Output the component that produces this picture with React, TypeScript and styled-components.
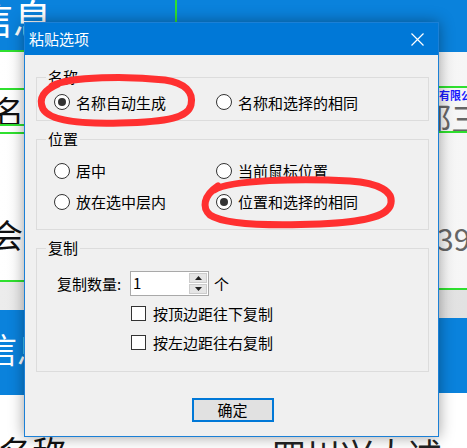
import React from 'react';
import styled, { createGlobalStyle } from 'styled-components';

const GlobalStyle = createGlobalStyle`
  html, body {
    margin: 0;
    padding: 0;
    overflow: hidden;
    background: #ffffff;
  }
  body {
    font-family: "Noto Sans CJK SC", "Noto Sans", sans-serif;
  }
`;

const BLUE = '#0a82dc';
const GREEN = '#2fe02f';

const Desktop = styled.div`
  position: relative;
  width: 467px;
  height: 448px;
  overflow: hidden;
`;

/* ---------- page behind the dialog ---------- */

const Backdrop = styled.div`
  display: grid;
  grid-template-columns: 175px 1fr;
  height: 448px;
`;

const Column = styled.div`
  display: flex;
  flex-direction: column;
  overflow: hidden;
`;

const Cell = styled.div<{ $h: number; $bg?: string; $line?: boolean; $divider?: boolean; $padTop?: number; $padLeft?: number }>`
  flex: 0 0 ${(p) => p.$h}px;
  box-sizing: border-box;
  background: ${(p) => p.$bg || 'linear-gradient(90deg, #ffffff, #f6f6f6)'};
  border-top: ${(p) => (p.$line ? `2px solid ${GREEN}` : 'none')};
  border-left: ${(p) => (p.$divider ? `2px solid ${GREEN}` : 'none')};
  padding-top: ${(p) => p.$padTop || 0}px;
  padding-left: ${(p) => p.$padLeft || 0}px;
  overflow: hidden;
  white-space: nowrap;
`;

const BigText = styled.div<{ $color: string; $size: number; $shift?: number }>`
  color: ${(p) => p.$color};
  font-size: ${(p) => p.$size}px;
  line-height: 1;
  margin-left: ${(p) => p.$shift || 0}px;
`;

const SmallBlue = styled.div`
  color: #1a1aff;
  font-size: 11px;
  font-weight: bold;
  line-height: 11px;
`;

/* ---------- dialog ---------- */

const Dialog = styled.div`
  position: absolute;
  left: 24px;
  top: 22px;
  width: 415px;
  height: 415px;
  box-sizing: border-box;
  border: 1px solid #1b80d6;
  background: #f0f0f0;
  box-shadow: 0 0 14px rgba(0, 0, 0, 0.38);
  display: flex;
  flex-direction: column;
  font-family: "Noto Sans CJK SC", "Noto Sans", sans-serif;
  font-size: 15px;
  color: #000;
`;

const TitleBar = styled.div`
  flex: 0 0 32px;
  background: #0078d7;
  color: #fff;
  display: flex;
  align-items: center;
  justify-content: space-between;
  padding-left: 4px;
`;

const TitleText = styled.span`
  font-size: 15px;
  line-height: 20px;
`;

const CloseIcon = styled.svg`
  width: 13px;
  height: 13px;
  margin-right: 14px;
`;

const Body = styled.div`
  padding: 12px 9px 0 11px;
  display: flex;
  flex-direction: column;
`;

const GroupBox = styled.fieldset<{ $gap?: number }>`
  margin: ${(p) => p.$gap || 0}px 0 0 0;
  padding: 0;
  min-width: 0;
  border: 1px solid #dcdcdc;
`;

const Legend = styled.legend`
  margin-left: 9px;
  padding: 0 2px;
  line-height: 20px;
  font-size: 15px;
`;

const RadioGrid = styled.div<{ $rowH: number; $padTop: number; $padBottom: number }>`
  display: grid;
  grid-template-columns: 162px 1fr;
  grid-auto-rows: ${(p) => p.$rowH}px;
  padding: ${(p) => p.$padTop}px 0 ${(p) => p.$padBottom}px 17px;
`;

const Option = styled.label`
  display: flex;
  align-items: center;
  gap: 6px;
  white-space: nowrap;
`;

const RadioCircle = styled.span<{ $checked?: boolean }>`
  width: 16px;
  height: 16px;
  box-sizing: border-box;
  border: 1px solid #333;
  border-radius: 50%;
  background: #fff;
  display: flex;
  align-items: center;
  justify-content: center;

  &::after {
    content: '';
    width: 8px;
    height: 8px;
    border-radius: 50%;
    background: ${(p) => (p.$checked ? '#333' : 'transparent')};
  }
`;

const CopyArea = styled.div`
  padding: 13px 0 14px 0;
`;

const SpinRow = styled.div`
  display: flex;
  align-items: center;
  height: 25px;
  padding-left: 20px;
`;

const FieldLabel = styled.span`
  width: 73px;
  white-space: nowrap;
`;

const SpinBox = styled.div`
  width: 79px;
  height: 25px;
  box-sizing: border-box;
  border: 1px solid #a9a9a9;
  background: #fff;
  display: flex;
`;

const SpinValue = styled.span`
  flex: 1;
  padding-left: 2px;
  line-height: 22px;
`;

const SpinButtons = styled.div`
  width: 18px;
  display: flex;
  flex-direction: column;
  padding: 1px 1px 1px 0;
  gap: 1px;
`;

const SpinButton = styled.div`
  flex: 1;
  background: #e5e5e5;
  border: 1px solid #cccccc;
  display: flex;
  align-items: center;
  justify-content: center;
`;

const Unit = styled.span`
  margin-left: 5px;
`;

const CheckRow = styled.label`
  display: flex;
  align-items: center;
  gap: 7px;
  height: 29px;
  padding-left: 94px;
  white-space: nowrap;

  &:first-of-type {
    margin-top: 3px;
  }
`;

const CheckBox = styled.span`
  width: 15px;
  height: 15px;
  box-sizing: border-box;
  border: 1px solid #333;
  background: #fff;
`;

const ButtonRow = styled.div`
  display: flex;
  justify-content: center;
  margin-top: 26px;
`;

const OkButton = styled.button`
  width: 82px;
  height: 24px;
  box-sizing: border-box;
  border: 2px solid #0078d7;
  background: #e1e1e1;
  font-family: inherit;
  font-size: 15px;
  line-height: 18px;
  color: #000;
  padding: 0;
`;

const Annotations = styled.svg`
  position: absolute;
  left: 0;
  top: 0;
  pointer-events: none;
`;

const Radio: React.FC<{ label: string; checked?: boolean }> = ({ label, checked }) => (
  <Option>
    <RadioCircle $checked={checked} />
    <span>{label}</span>
  </Option>
);

const Arrow: React.FC<{ up?: boolean }> = ({ up }) => (
  <svg width="7" height="4" viewBox="0 0 7 4">
    <path d={up ? 'M0 4 L3.5 0 L7 4 Z' : 'M0 0 L3.5 4 L7 0 Z'} fill="#222" />
  </svg>
);

export default function App() {
  return (
    <>
      <GlobalStyle />
      <Desktop>
        <Backdrop>
          <Column>
            <Cell $h={50} $bg={BLUE}>
              <BigText $color="#fff" $size={40} $shift={-27} style={{ marginTop: -3 }}>信息</BigText>
            </Cell>
            <Cell $h={38} $line />
            <Cell $h={36} $line $padTop={4}>
              <BigText $color="#111" $size={32} $shift={-8}>名称</BigText>
            </Cell>
            <Cell $h={8} $line />
            <Cell $h={148} $line $padTop={84}>
              <BigText $color="#111" $size={33} $shift={-10}>会</BigText>
            </Cell>
            <Cell $h={30} $line $bg="linear-gradient(90deg, #ececec, #e2e2e2)" />
            <Cell $h={85} $bg={BLUE} $padTop={22}>
              <BigText $color="#fff" $size={34} $shift={-17}>信息</BigText>
            </Cell>
            <Cell $h={53} $bg="#fff" $padTop={40}>
              <BigText $color="#111" $size={34} $shift={-2}>名称</BigText>
            </Cell>
          </Column>
          <Column>
            <Cell $h={52} $bg={BLUE} $divider />
            <Cell $h={34} />
            <Cell $h={45} $line $padTop={2} $padLeft={264}>
              <SmallBlue>有限公司</SmallBlue>
              <BigText $color="#666" $size={32} $shift={-20}>都三</BigText>
            </Cell>
            <Cell $h={157} $line $padTop={90} $padLeft={262}>
              <BigText $color="#666" $size={30}>39</BigText>
            </Cell>
            <Cell $h={30} $line $bg="linear-gradient(90deg, #ececec, #e2e2e2)" />
            <Cell $h={75} $bg={BLUE} />
            <Cell $h={55} $bg="#fff" $padTop={44} $padLeft={97}>
              <BigText $color="#222" $size={34}>四川兴大述</BigText>
            </Cell>
          </Column>
        </Backdrop>

        <Dialog>
          <TitleBar>
            <TitleText>粘贴选项</TitleText>
            <CloseIcon viewBox="0 0 13 13">
              <path d="M0.5 0.5 L12.5 12.5 M12.5 0.5 L0.5 12.5" stroke="#fff" strokeWidth="1.2" />
            </CloseIcon>
          </TitleBar>
          <Body>
            <GroupBox>
              <Legend>名称</Legend>
              <RadioGrid $rowH={30} $padTop={0} $padBottom={3}>
                <Radio label="名称自动生成" checked />
                <Radio label="名称和选择的相同" />
              </RadioGrid>
            </GroupBox>

            <GroupBox $gap={8}>
              <Legend>位置</Legend>
              <RadioGrid $rowH={31} $padTop={6} $padBottom={12}>
                <Radio label="居中" />
                <Radio label="当前鼠标位置" />
                <Radio label="放在选中层内" />
                <Radio label="位置和选择的相同" checked />
              </RadioGrid>
            </GroupBox>

            <GroupBox $gap={8}>
              <Legend>复制</Legend>
              <CopyArea>
                <SpinRow>
                  <FieldLabel>复制数量:</FieldLabel>
                  <SpinBox>
                    <SpinValue>1</SpinValue>
                    <SpinButtons>
                      <SpinButton><Arrow up /></SpinButton>
                      <SpinButton><Arrow /></SpinButton>
                    </SpinButtons>
                  </SpinBox>
                  <Unit>个</Unit>
                </SpinRow>
                <CheckRow>
                  <CheckBox />
                  <span>按顶边距往下复制</span>
                </CheckRow>
                <CheckRow>
                  <CheckBox />
                  <span>按左边距往右复制</span>
                </CheckRow>
              </CopyArea>
            </GroupBox>

            <ButtonRow>
              <OkButton>确定</OkButton>
            </ButtonRow>
          </Body>
        </Dialog>

        <Annotations width="467" height="448" viewBox="0 0 467 448">
          <path
            d="M52 86 C70 76, 130 76, 165 80 C185 83, 194 92, 191 105 C188 117, 170 122, 120 123 C80 124, 50 121, 43 109 C38 98, 44 90, 58 84"
            fill="none"
            stroke="#ff3030"
            strokeWidth="7"
            strokeLinecap="round"
          />
          <path
            d="M214 190 C230 180, 300 178, 350 181 C380 183, 393 192, 391 203 C389 215, 370 222, 320 224 C270 226, 225 225, 210 215 C202 208, 203 196, 218 186"
            fill="none"
            stroke="#ff3030"
            strokeWidth="7"
            strokeLinecap="round"
          />
        </Annotations>
      </Desktop>
    </>
  );
}
